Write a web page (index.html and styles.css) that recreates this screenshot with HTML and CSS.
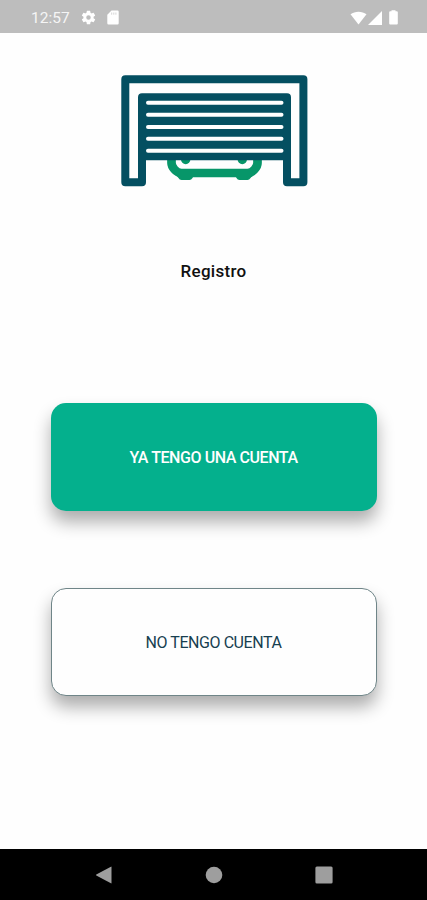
FILE: index.html
```html
<!DOCTYPE html>
<html lang="es">
<head>
    <meta charset="UTF-8">
    <meta name="viewport" content="width=device-width, initial-scale=1.0">
    <title>Registro</title>
    <link rel="stylesheet" href="styles.css">
</head>
<body>
    <header class="status-bar">
        <span class="time">12:57</span>
        <svg class="gear" width="17" height="17" viewBox="0 0 24 24">
            <path d="M19.14 12.94c.04-.3.06-.61.06-.94s-.02-.64-.07-.94l2.03-1.58a.49.49 0 0 0 .12-.61l-1.92-3.32a.49.49 0 0 0-.59-.22l-2.39.96a7 7 0 0 0-1.62-.94l-.36-2.54A.48.48 0 0 0 13.92 2.4h-3.84a.48.48 0 0 0-.47.41l-.36 2.54a7.3 7.3 0 0 0-1.62.94l-2.39-.96a.48.48 0 0 0-.59.22L2.74 8.87a.48.48 0 0 0 .12.61l2.03 1.58a7.5 7.5 0 0 0 0 1.88l-2.03 1.58a.49.49 0 0 0-.12.61l1.92 3.32c.12.22.37.29.59.22l2.39-.96c.5.38 1.03.7 1.62.94l.36 2.54c.05.24.24.41.48.41h3.84c.24 0 .44-.17.47-.41l.36-2.54a7 7 0 0 0 1.62-.94l2.39.96c.22.08.47 0 .59-.22l1.92-3.32a.48.48 0 0 0-.12-.61zM12 15.2a3.2 3.2 0 1 1 0-6.4 3.2 3.2 0 0 1 0 6.4z"/>
        </svg>
        <svg class="sd-card" width="12" height="15" viewBox="0 0 12 15">
            <path d="M4.500 0.500h6a1.200 1.200 0 0 1 1.200 1.200v11.600a1.200 1.200 0 0 1-1.200 1.200h-9a1.200 1.200 0 0 1-1.200-1.200V4.700z"/>
            <path class="notch" d="M4.700 2.500v2.200M6.800 2.500v2.200M8.900 2.500v2.200"/>
        </svg>
        <div class="signals">
            <svg width="17" height="14" viewBox="0 0 17 14">
                <path d="M8.500 13.500L0.500 3.200C5 -0.200 12 -0.200 16.500 3.200z"/>
            </svg>
            <svg width="14" height="14" viewBox="0 0 14 14">
                <path d="M0 14L14 0v14z"/>
            </svg>
            <svg class="battery" width="9" height="15" viewBox="0 0 9 15">
                <path d="M2.500 0.300h4v1h1.300a1 1 0 0 1 1 1v11.200a1 1 0 0 1-1 1H1.200a1 1 0 0 1-1-1V2.300a1 1 0 0 1 1-1h1.300z"/>
            </svg>
        </div>
    </header>

    <main class="content">
        <svg class="logo" width="188" height="114" viewBox="120 74 188 114">
            <!-- car -->
            <path class="car" d="M171.500 158v5q0 3 3 6.500 3 3.500 7 3.500h66q4 0 7-3.500 3-3.500 3-6.500V158"/>
            <path class="wheel" d="M174 173h21l-2.500 5q-1.200 2-3 2h-8q-2 0-3-2zM234 173h21l-4.500 5q-1.200 2-3 2h-8q-2 0-3-2z"/>
            <circle class="wheel" cx="185.700" cy="159.500" r="4.700"/>
            <circle class="wheel" cx="242.300" cy="159.500" r="4.700"/>
            <!-- garage frame -->
            <path class="frame" d="M125.300 79.200H303.400V182.200H287V97.300H142V182.200H125.300z"/>
            <!-- door -->
            <path class="door" d="M142 97H287V160.300H142z"/>
            <path class="slats" d="M148 102.800H281.500M148 114.800H281.500M148 127H281.500M148 138.800H281.500M148 150.700H281.500"/>
        </svg>

        <h1>Registro</h1>

        <button class="btn btn-primary">YA TENGO UNA CUENTA</button>
        <button class="btn btn-outline">NO TENGO CUENTA</button>
    </main>

    <nav class="nav-bar">
        <svg width="18" height="18" viewBox="0 0 18 18">
            <path d="M16.500 1v16q0 .6-.6.300L1.300 9.500q-.8-.5 0-1L15.900.700q.6-.3.600.300z"/>
        </svg>
        <svg width="18" height="18" viewBox="0 0 18 18">
            <circle cx="9" cy="9" r="8.300"/>
        </svg>
        <svg width="18" height="18" viewBox="0 0 18 18">
            <rect x="0.400" y="0.500" width="17.200" height="17" rx="1.500"/>
        </svg>
    </nav>
</body>
</html>
```

FILE: styles.css
```css
* {
    box-sizing: border-box;
}

body {
    margin: 0;
    height: 100vh;
    display: flex;
    flex-direction: column;
    background: #fefefe;
    font-family: 'Roboto', sans-serif;
    overflow: hidden;
}

.status-bar {
    height: 33px;
    padding: 2px 29px 0 31px;
    display: flex;
    align-items: center;
    background: #bdbdbd;
    color: #f5f5f5;
}

.status-bar svg {
    fill: white;
}

.time {
    width: 49px;
    font-size: 15.5px;
    line-height: 20px;
}

.gear {
    flex-shrink: 0;
}

.sd-card {
    margin-left: 10px;
}

.sd-card .notch {
    stroke: #bdbdbd;
    stroke-width: 1;
    opacity: 0.6;
}

.signals {
    display: flex;
    align-items: center;
    gap: 1px;
    margin-left: auto;
}

.battery {
    margin-left: 6px;
}

.content {
    flex: 1;
    display: flex;
    flex-direction: column;
    align-items: center;
}

.logo {
    margin-top: 41px;
}

.car {
    fill: none;
    stroke: #079669;
    stroke-width: 8.7;
}

.wheel {
    fill: #079669;
}

.frame {
    fill: none;
    stroke: #044f61;
    stroke-width: 8;
    stroke-linejoin: round;
}

.door {
    fill: #044f61;
}

.slats {
    stroke: #fefefe;
    stroke-width: 4;
    stroke-linecap: round;
}

h1 {
    margin: 73px 0 121px;
    font-size: 17px;
    line-height: 21px;
    font-weight: 500;
    letter-spacing: 0.3px;
    color: #111;
}

.btn {
    width: 326px;
    height: 108px;
    padding: 0;
    border: none;
    border-radius: 15px;
    font-family: inherit;
    font-size: 16px;
    letter-spacing: -0.43px;
    box-shadow: 0 11px 17px rgba(0, 0, 0, 0.32);
    cursor: pointer;
}

.btn-primary {
    background: #04b08d;
    color: white;
    font-weight: 500;
}

.btn-outline {
    margin-top: 77px;
    background: #fefefe;
    border: 1px solid #6f8588;
    color: #173f50;
}

.nav-bar {
    height: 51px;
    display: flex;
    justify-content: center;
    align-items: center;
    gap: 92px;
    background: black;
}

.nav-bar svg {
    fill: #9e9e9e;
}
```
